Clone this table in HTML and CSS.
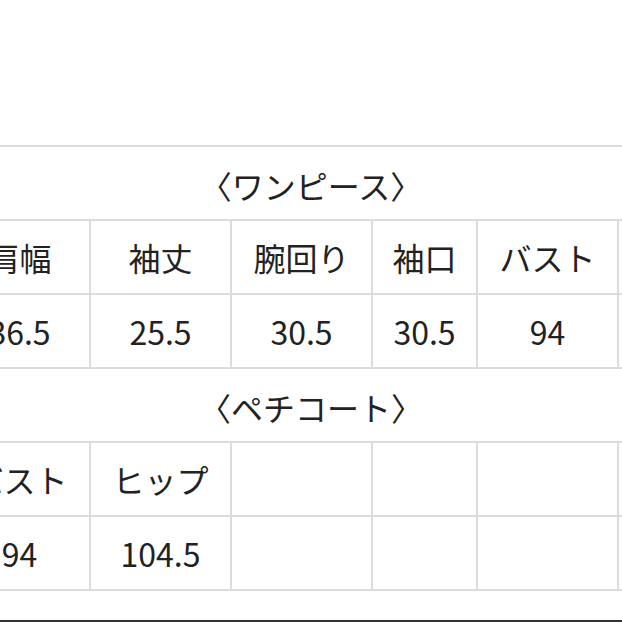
FILE: index.html
```html
<!DOCTYPE html>
<html lang="ja">
<head>
<meta charset="utf-8">
<title>サイズ表</title>
<link rel="stylesheet" href="styles.css">
</head>
<body>
<main class="page">
  <div class="table-wrap">
    <table class="size-table">
      <colgroup>
        <col class="c-wide"><col class="c-wide"><col class="c-wide"><col class="c-narrow"><col class="c-wide"><col class="c-end">
      </colgroup>
      <tbody>
        <tr class="caption-row"><td colspan="6">〈ワンピース〉</td></tr>
        <tr><td>肩幅</td><td>袖丈</td><td>腕回り</td><td>袖口</td><td>バスト</td><td></td></tr>
        <tr><td>36.5</td><td>25.5</td><td>30.5</td><td>30.5</td><td>94</td><td></td></tr>
        <tr class="caption-row"><td colspan="6">〈ペチコート〉</td></tr>
        <tr><td>バスト</td><td>ヒップ</td><td></td><td></td><td></td><td></td></tr>
        <tr><td>94</td><td>104.5</td><td></td><td></td><td></td><td></td></tr>
      </tbody>
    </table>
  </div>
  <div class="bottom-bar"></div>
</main>
</body>
</html>
```

FILE: styles.css
```css
html, body {
  margin: 0;
  padding: 0;
  background: #ffffff;
}

.page {
  width: 622px;
  height: 622px;
  overflow: hidden;
  display: flex;
  flex-direction: column;
  font-family: "Noto Sans CJK JP", "Noto Sans", sans-serif;
  color: #222222;
}

.table-wrap {
  display: flex;
  justify-content: center;
  align-items: flex-start;
  padding-top: 145px;
}

.size-table {
  flex: none;
  width: 724px;
  table-layout: fixed;
  border-collapse: collapse;
  font-size: 32px;
}

.c-wide { width: 141px; }
.c-narrow { width: 105px; }
.c-end { width: 55px; }

.size-table td {
  height: 72px;
  padding: 0;
  border: 2px solid #dcdcdc;
  text-align: center;
  vertical-align: middle;
  line-height: 1.2;
  white-space: nowrap;
  overflow: hidden;
}

.caption-row td {
  height: 68px;
  padding-top: 4px;
}

.bottom-bar {
  margin-top: auto;
  height: 2px;
  background: #333333;
}
```
